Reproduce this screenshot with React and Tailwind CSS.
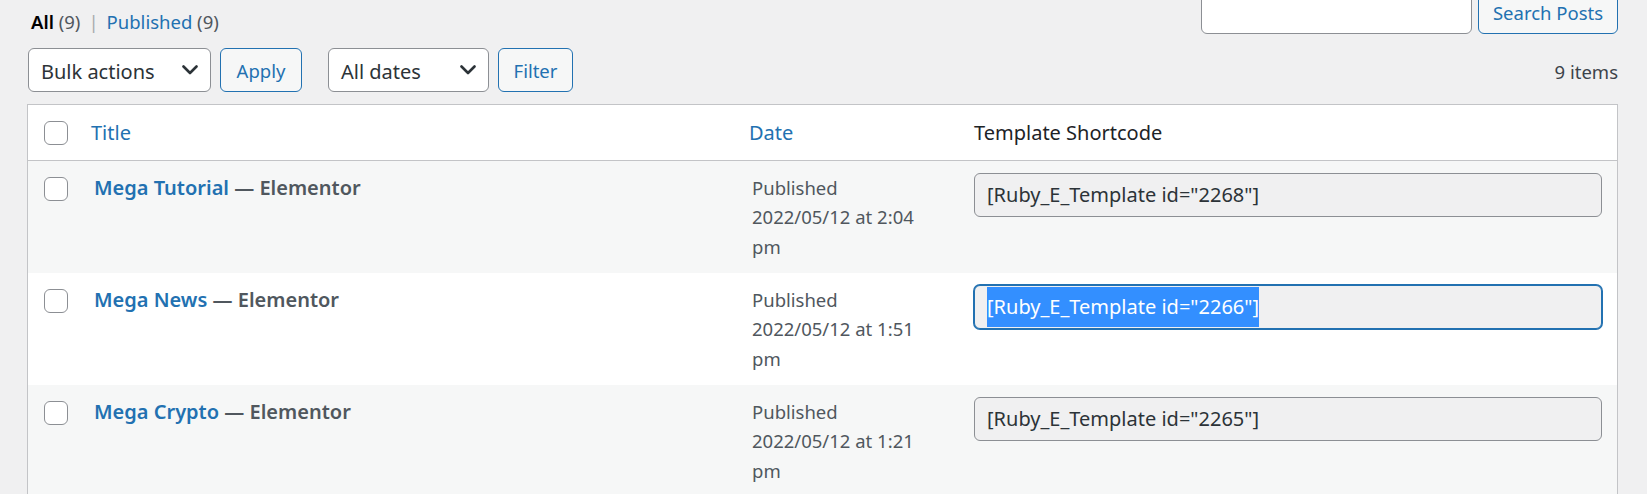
import React from "react";

const font = { fontFamily: '"Noto Sans", "Open Sans", sans-serif' };

function Chevron() {
  return (
    <svg width="16" height="10" viewBox="0 0 16 10" className="shrink-0">
      <path d="M1.5 1.5 L8 8 L14.5 1.5" fill="none" stroke="#2c3338" strokeWidth="2.6" strokeLinecap="round" strokeLinejoin="round" />
    </svg>
  );
}

function Select({ label, w }) {
  return (
    <div className={`${w} h-[44px] flex items-center justify-between bg-white border border-[#8c8f94] rounded-[6px] pl-[12px] pr-[12px] text-[20px] text-[#2c3338]`}>
      <span className="leading-none pt-[3px]">{label}</span>
      <Chevron />
    </div>
  );
}

function Btn({ label, w }) {
  return (
    <div className={`${w} h-[44px] flex items-center justify-center bg-[#f6f7f7] border border-[#2271b1] rounded-[6px] text-[18.5px] text-[#2271b1]`}>
      <span className="leading-none pt-[3px]">{label}</span>
    </div>
  );
}

function Check({ className = "" }) {
  return <div className={`w-[24px] h-[24px] bg-white border border-[#8c8f94] rounded-[6px] ${className}`} />;
}

const rows = [
  { title: "Mega Tutorial", time: "2:04", id: "2268", bg: "bg-[#f6f7f7]" },
  { title: "Mega News", time: "1:51", id: "2266", bg: "bg-white", focus: true },
  { title: "Mega Crypto", time: "1:21", id: "2265", bg: "bg-[#f6f7f7]" },
];

export default function App() {
  return (
    <div style={font} className="w-[1647px] h-[494px] overflow-hidden bg-[#f0f0f1] pl-[27px] pr-[29px] text-[#3c434a]">
      {/* top row */}
      <div className="h-[48px] flex items-start justify-between">
        <div className="pt-[7px] pl-[4px] text-[18.5px] leading-[29px]">
          <span className="font-semibold text-[#000]">All</span>
          <span className="text-[#50575e]"> (9)</span>
          <span className="text-[#a7aaad] px-[8px]">|</span>
          <span className="text-[#2271b1]">Published</span>
          <span className="text-[#50575e]"> (9)</span>
        </div>
        <div className="flex gap-[6px] mt-[-9px]">
          <div className="w-[271px] h-[43px] bg-white border border-[#8c8f94] rounded-[6px]" />
          <div className="w-[140px] h-[43px] flex items-center justify-center bg-[#f6f7f7] border border-[#2271b1] rounded-[6px] text-[18.5px] text-[#2271b1]">
            <span className="leading-none pt-[2px]">Search Posts</span>
          </div>
        </div>
      </div>

      {/* tablenav */}
      <div className="h-[44px] flex items-center">
        <div className="pl-[1px]"><Select label="Bulk actions" w="w-[183px]" /></div>
        <div className="ml-[9px]"><Btn label="Apply" w="w-[82px]" /></div>
        <div className="ml-[26px]"><Select label="All dates" w="w-[161px]" /></div>
        <div className="ml-[9px]"><Btn label="Filter" w="w-[75px]" /></div>
        <div className="ml-auto pt-[3px] text-[18.5px] text-[#3c434a]">9 items</div>
      </div>

      {/* table */}
      <div className="mt-[12px] border border-[#c3c4c7] bg-white">
        <div className="flex h-[56px] border-b border-[#c3c4c7] text-[20px]">
          <div className="w-[48px] shrink-0 pl-[16px] pt-[16px]"><Check /></div>
          <div className="w-[658px] shrink-0 pl-[15px] flex items-center text-[#2271b1]">Title</div>
          <div className="w-[225px] shrink-0 pl-[15px] flex items-center text-[#2271b1]">Date</div>
          <div className="flex-1 pl-[15px] flex items-center text-[#1d2327]">Template Shortcode</div>
        </div>
        {rows.map((r) => (
          <div key={r.id} className={`flex h-[112px] ${r.bg}`}>
            <div className="w-[48px] shrink-0 pl-[16px] pt-[16px]"><Check /></div>
            <div className="w-[658px] shrink-0 pl-[18px] pt-[12px] text-[20px] leading-[30px] font-semibold">
              <span className="text-[#2271b1]">{r.title}</span>
              <span className="text-[#50575e]"> — Elementor</span>
            </div>
            <div className="w-[225px] shrink-0 pl-[18px] pt-[12px] text-[18.5px] leading-[29.25px] text-[#50575e]">
              <div>Published</div>
              <div>2022/05/12 at {r.time}</div>
              <div>pm</div>
            </div>
            <div className="flex-1 pl-[15px] pr-[15px] pt-[12px]">
              {r.focus ? (
                <div className="h-[44px] bg-[#f0f0f1] border border-[#2271b1] shadow-[0_0_0_1px_#2271b1] rounded-[6px] pl-[12px] pt-[1px] pb-[1px] text-[20px] text-white flex">
                  <span className="bg-[#338fff] h-full flex items-center">[Ruby_E_Template id="{r.id}"]</span>
                </div>
              ) : (
                <div className="h-[44px] bg-[#f0f0f1] border border-[#8c8f94] rounded-[6px] pl-[12px] text-[20px] text-[#2c3338] flex items-center">
                  [Ruby_E_Template id="{r.id}"]
                </div>
              )}
            </div>
          </div>
        ))}
      </div>
    </div>
  );
}
